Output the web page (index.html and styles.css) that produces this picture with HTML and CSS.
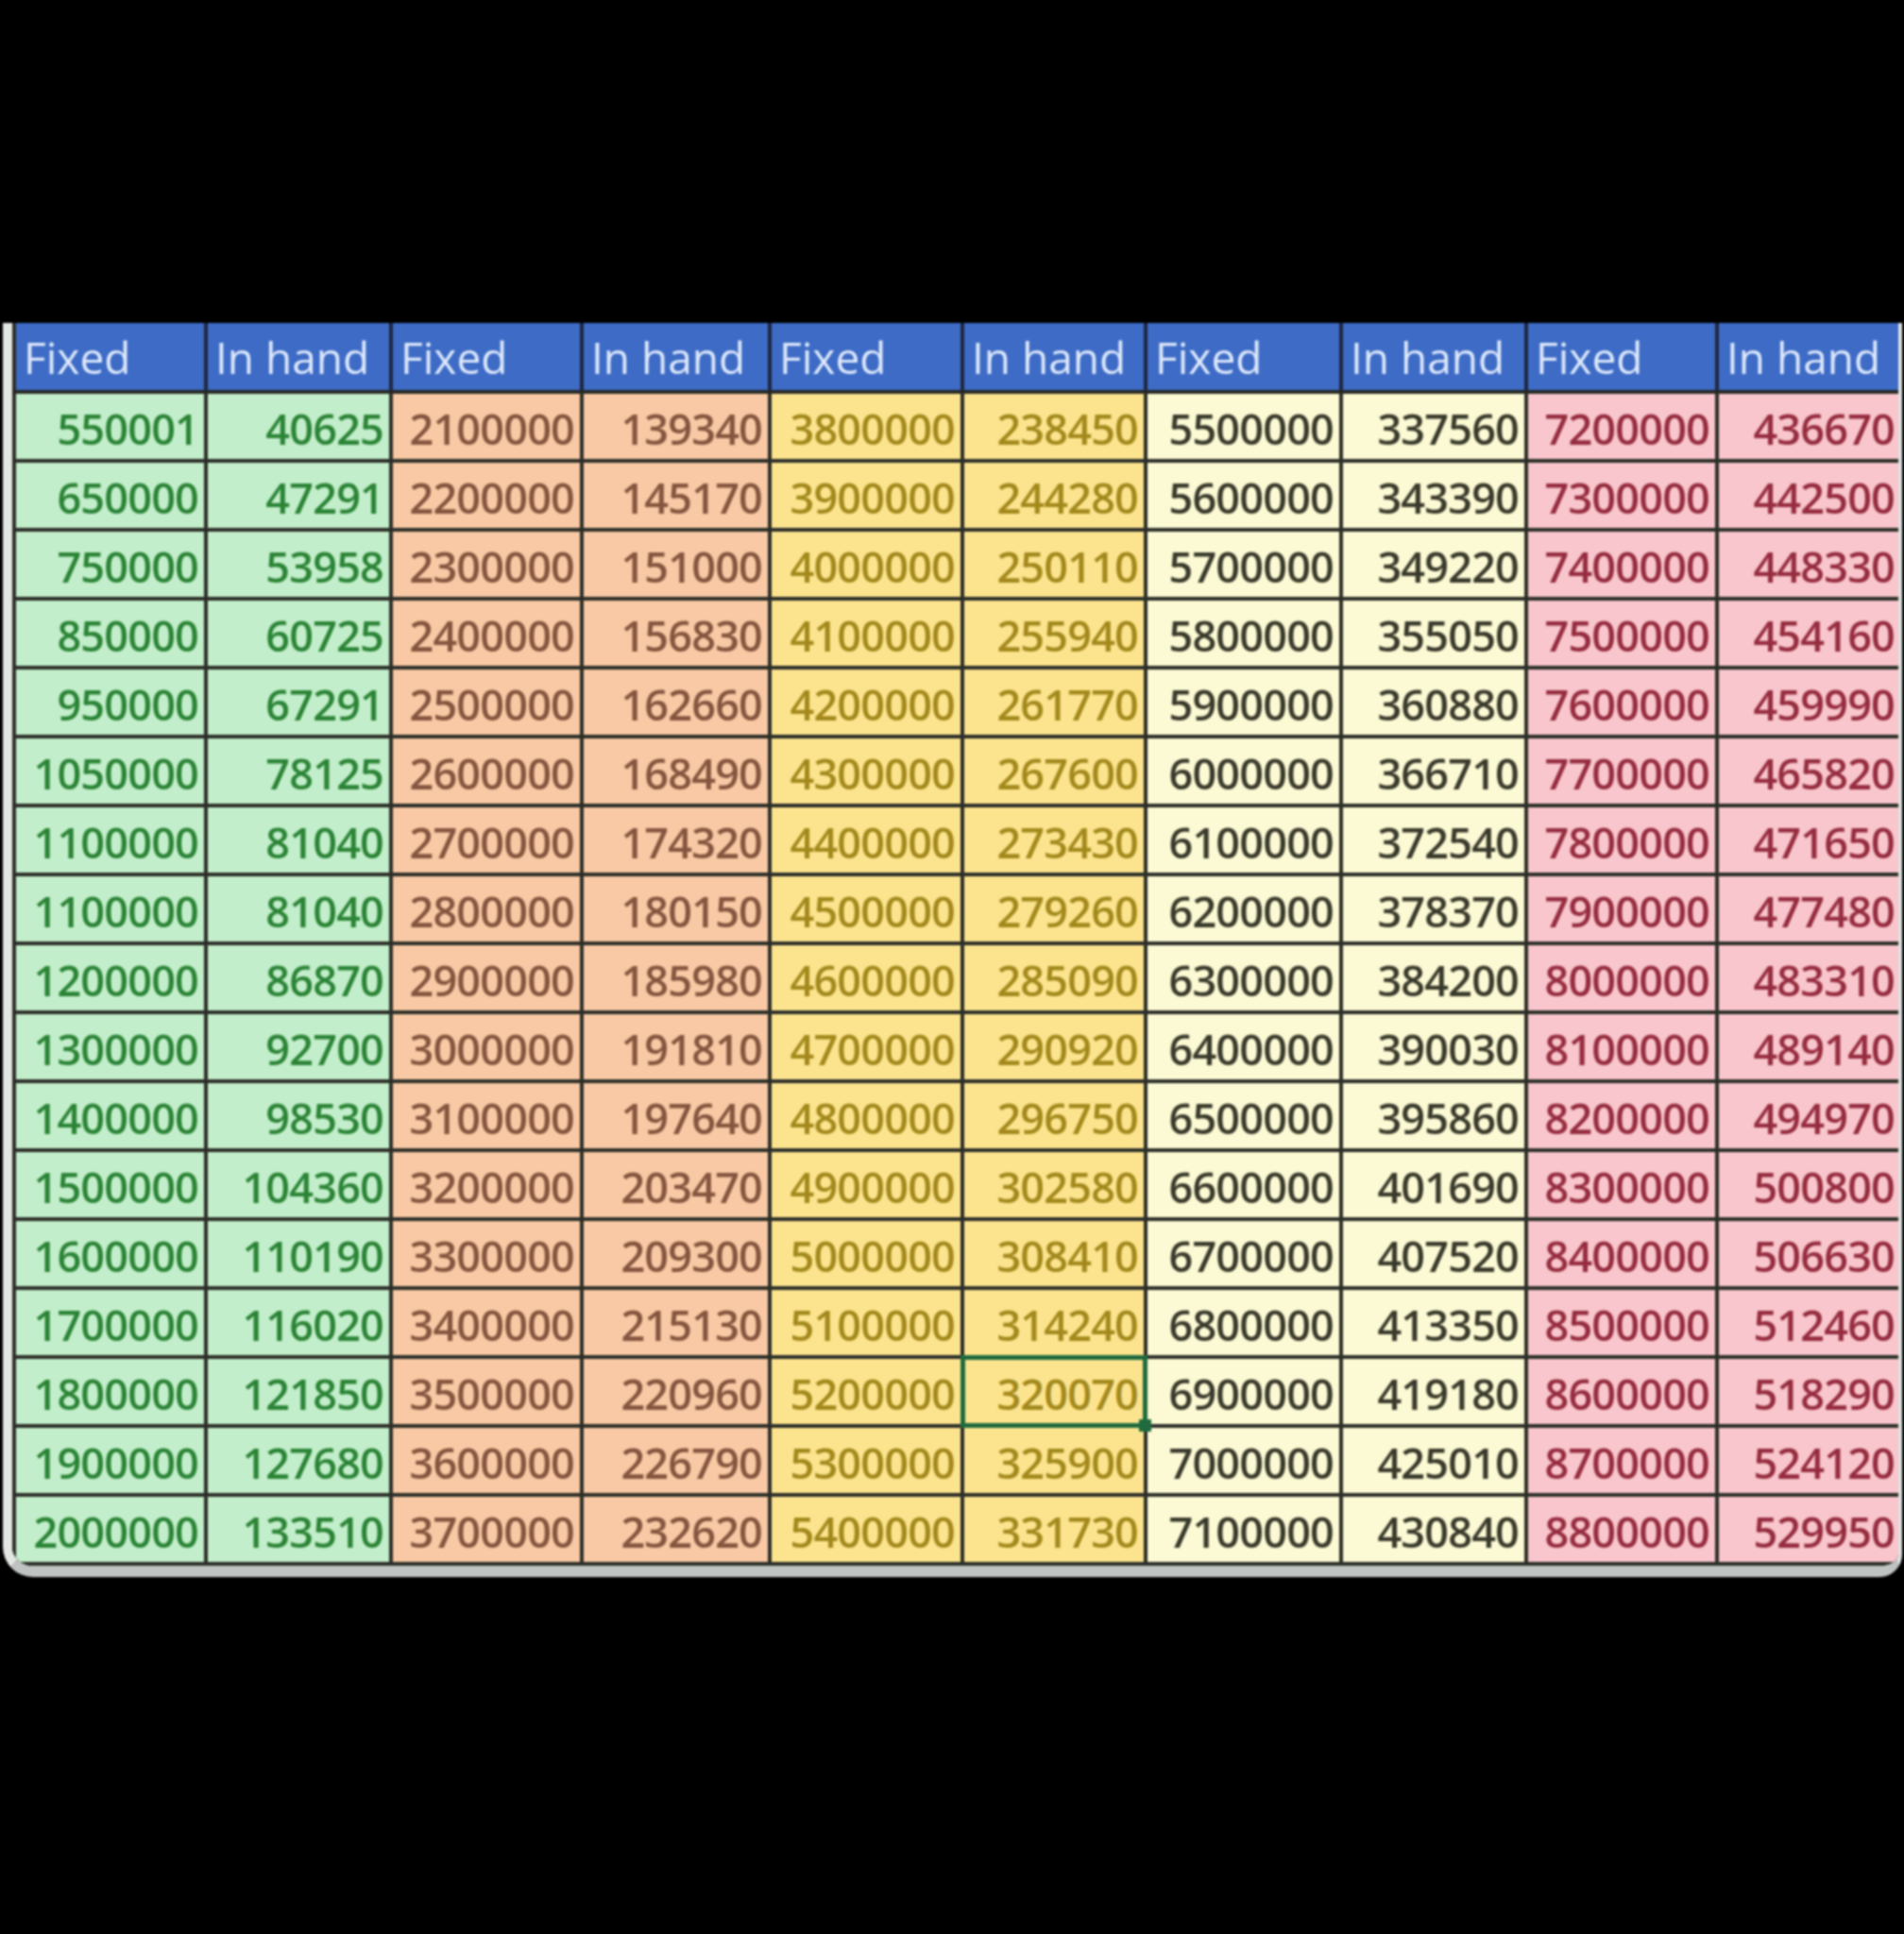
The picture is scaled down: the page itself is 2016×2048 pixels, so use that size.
FILE: index.html
```html
<!DOCTYPE html>
<html>
<head>
<meta charset="utf-8">
<link rel="stylesheet" href="styles.css">
</head>
<body>
<div class="page">
<div class="sheet">
<table class="grid">
<colgroup>
<col style="width:203px"><col style="width:196px"><col style="width:202px"><col style="width:199px"><col style="width:204px"><col style="width:194px"><col style="width:207px"><col style="width:196px"><col style="width:202px"><col style="width:194px">
</colgroup>
<thead>
<tr><th>Fixed</th><th>In hand</th><th>Fixed</th><th>In hand</th><th>Fixed</th><th>In hand</th><th>Fixed</th><th>In hand</th><th>Fixed</th><th>In hand</th></tr>
</thead>
<tbody>
<tr><td>550001</td><td>40625</td><td>2100000</td><td>139340</td><td>3800000</td><td>238450</td><td>5500000</td><td>337560</td><td>7200000</td><td>436670</td></tr>
<tr><td>650000</td><td>47291</td><td>2200000</td><td>145170</td><td>3900000</td><td>244280</td><td>5600000</td><td>343390</td><td>7300000</td><td>442500</td></tr>
<tr><td>750000</td><td>53958</td><td>2300000</td><td>151000</td><td>4000000</td><td>250110</td><td>5700000</td><td>349220</td><td>7400000</td><td>448330</td></tr>
<tr><td>850000</td><td>60725</td><td>2400000</td><td>156830</td><td>4100000</td><td>255940</td><td>5800000</td><td>355050</td><td>7500000</td><td>454160</td></tr>
<tr><td>950000</td><td>67291</td><td>2500000</td><td>162660</td><td>4200000</td><td>261770</td><td>5900000</td><td>360880</td><td>7600000</td><td>459990</td></tr>
<tr><td>1050000</td><td>78125</td><td>2600000</td><td>168490</td><td>4300000</td><td>267600</td><td>6000000</td><td>366710</td><td>7700000</td><td>465820</td></tr>
<tr><td>1100000</td><td>81040</td><td>2700000</td><td>174320</td><td>4400000</td><td>273430</td><td>6100000</td><td>372540</td><td>7800000</td><td>471650</td></tr>
<tr><td>1100000</td><td>81040</td><td>2800000</td><td>180150</td><td>4500000</td><td>279260</td><td>6200000</td><td>378370</td><td>7900000</td><td>477480</td></tr>
<tr><td>1200000</td><td>86870</td><td>2900000</td><td>185980</td><td>4600000</td><td>285090</td><td>6300000</td><td>384200</td><td>8000000</td><td>483310</td></tr>
<tr><td>1300000</td><td>92700</td><td>3000000</td><td>191810</td><td>4700000</td><td>290920</td><td>6400000</td><td>390030</td><td>8100000</td><td>489140</td></tr>
<tr><td>1400000</td><td>98530</td><td>3100000</td><td>197640</td><td>4800000</td><td>296750</td><td>6500000</td><td>395860</td><td>8200000</td><td>494970</td></tr>
<tr><td>1500000</td><td>104360</td><td>3200000</td><td>203470</td><td>4900000</td><td>302580</td><td>6600000</td><td>401690</td><td>8300000</td><td>500800</td></tr>
<tr><td>1600000</td><td>110190</td><td>3300000</td><td>209300</td><td>5000000</td><td>308410</td><td>6700000</td><td>407520</td><td>8400000</td><td>506630</td></tr>
<tr><td>1700000</td><td>116020</td><td>3400000</td><td>215130</td><td>5100000</td><td>314240</td><td>6800000</td><td>413350</td><td>8500000</td><td>512460</td></tr>
<tr><td>1800000</td><td>121850</td><td>3500000</td><td>220960</td><td>5200000</td><td class="sel">320070<span class="sel-box"><span class="sel-handle"></span></span></td><td>6900000</td><td>419180</td><td>8600000</td><td>518290</td></tr>
<tr><td>1900000</td><td>127680</td><td>3600000</td><td>226790</td><td>5300000</td><td>325900</td><td>7000000</td><td>425010</td><td>8700000</td><td>524120</td></tr>
<tr><td>2000000</td><td>133510</td><td>3700000</td><td>232620</td><td>5400000</td><td>331730</td><td>7100000</td><td>430840</td><td>8800000</td><td>529950</td></tr>
</tbody>
</table>
</div>
</div>
</body>
</html>
```
FILE: styles.css
```css
html, body {
  margin: 0;
  padding: 0;
  background: #000;
}

.page {
  width: 2016px;
  height: 2048px;
  box-sizing: border-box;
  padding: 342px 0 0 3px;
  background: #000;
}

.sheet {
  width: 2011px;
  box-sizing: border-box;
  border-left: 10px solid #e3e7e4;
  border-right: 4px solid #dfe3e0;
  border-bottom: 12px solid #bfc3c1;
  border-radius: 0 0 24px 32px;
  overflow: hidden;
  filter: blur(0.8px);
}

.grid {
  width: 1997px;
  table-layout: fixed;
  border-collapse: collapse;
  font-family: "Open Sans", "Liberation Sans", sans-serif;
}

.grid th,
.grid td {
  height: 73px;
  box-sizing: border-box;
  padding: 0;
  border: 4px solid #2c2e28;
  white-space: nowrap;
  overflow: visible;
}

.grid tr > :first-child { border-left: 4px solid #2c2e28; }
.grid tr > :last-child { border-right: none; }
.grid thead th { border-top: none; }

.grid th {
  background: #3d6bc5;
  color: #dde8fb;
  font-size: 46px;
  font-weight: 500;
  text-align: left;
  padding-left: 8px;
  vertical-align: middle;
  border-color: #1d2640;
  border-bottom-color: #262824;
}

.grid td {
  font-size: 45px;
  font-weight: 600;
  text-align: right;
  padding-right: 6px;
  padding-top: 4px;
  vertical-align: middle;
  letter-spacing: -0.8px;
}

.grid td:nth-child(1),
.grid td:nth-child(2) {
  background: #c3eecb;
  color: #2b8436;
}

.grid td:nth-child(3),
.grid td:nth-child(4) {
  background: #f8c9a4;
  color: #85553f;
}

.grid td:nth-child(5),
.grid td:nth-child(6) {
  background: #fce48f;
  color: #a3891c;
}

.grid td:nth-child(7),
.grid td:nth-child(8) {
  background: #fcfad4;
  color: #3a3a2c;
}

.grid td:nth-child(9),
.grid td:nth-child(10) {
  background: #f8c6cc;
  color: #962c3f;
}

.grid td.sel {
  position: relative;
}

.sel-box {
  position: absolute;
  left: -4px;
  top: -4px;
  right: -4px;
  bottom: -4px;
  border: 5px solid #1f6b3d;
  pointer-events: none;
}

.sel-handle {
  position: absolute;
  right: -9px;
  bottom: -9px;
  width: 13px;
  height: 13px;
  background: #1f6b3d;
}
```
